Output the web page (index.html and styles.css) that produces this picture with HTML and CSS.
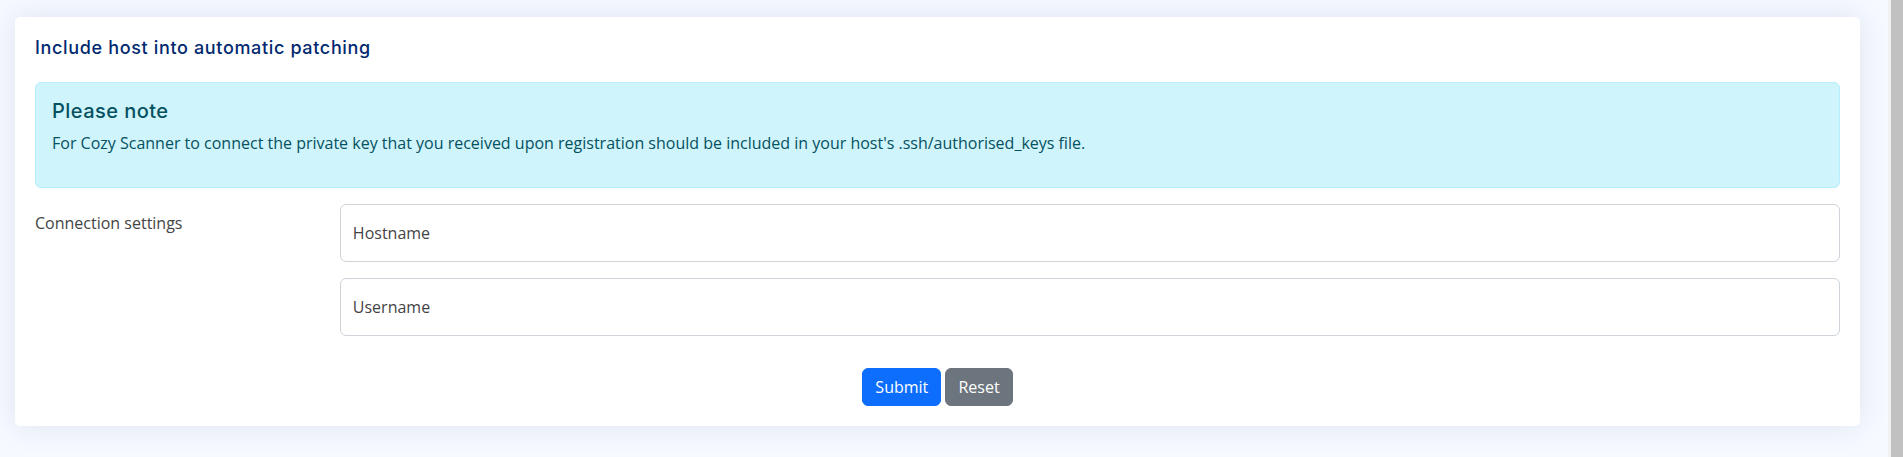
FILE: index.html
```html
<!DOCTYPE html>
<html lang="en">
<head>
<meta charset="utf-8">
<title>Include host into automatic patching</title>
<link rel="stylesheet" href="styles.css">
</head>
<body>
<div class="page">
  <main class="main">
    <section class="card">
      <div class="card-body">
        <h5 class="card-title">Include host into automatic patching</h5>
        <div class="alert">
          <h4 class="alert-heading">Please note</h4>
          <p class="alert-text">For Cozy Scanner to connect the private key that you received upon registration should be included in your host's .ssh/authorised_keys file.</p>
        </div>
        <form class="form">
          <div class="form-row">
            <label class="col-label" for="hostname">Connection settings</label>
            <div class="fields">
              <input class="field" id="hostname" type="text" placeholder="Hostname">
              <input class="field" id="username" type="text" placeholder="Username">
            </div>
          </div>
          <div class="actions">
            <button type="submit" class="btn btn-primary">Submit</button>
            <button type="reset" class="btn btn-secondary">Reset</button>
          </div>
        </form>
      </div>
    </section>
  </main>
  <div class="scrollbar"><div class="scrollbar-thumb"></div></div>
</div>
</body>
</html>
```

FILE: styles.css
```css
* { box-sizing: border-box; }

html, body {
  margin: 0;
  height: 100%;
  overflow: hidden;
}

body {
  background: #f6f9ff;
  font-family: "Open Sans", "Liberation Sans", sans-serif;
  font-size: 16px;
  line-height: 1.5;
  color: #444444;
}

.page {
  display: flex;
  height: 100%;
}

.main {
  flex: 1;
  padding: 17px 28px 0 15px;
}

.card {
  background: #ffffff;
  border-radius: 5px;
  box-shadow: 0 0 30px rgba(1, 41, 112, 0.1);
}

.card-body {
  padding: 0 20px 20px 20px;
}

.card-title {
  margin: 0 0 8px 0;
  padding: 20px 0 15px 0;
  font-family: "Inter", "Noto Sans", sans-serif;
  font-size: 18px;
  font-weight: 500;
  line-height: 1.2;
  color: #012970;
  letter-spacing: 0.65px;
}

.alert {
  background: #cff4fc;
  border: 1px solid #b6effb;
  border-radius: 6px;
  padding: 16px;
  color: #055160;
  margin-bottom: 16px;
}

.alert-heading {
  margin: 0 0 8px 0;
  font-family: "Inter", "Noto Sans", sans-serif;
  font-size: 20px;
  font-weight: 500;
  line-height: 1.2;
  color: #055160;
  letter-spacing: 0.45px;
}

.alert-text {
  margin: 0 0 16px 0;
  font-size: 16px;
  line-height: 1.5;
}

.form-row {
  display: grid;
  grid-template-columns: calc((100% + 24px) / 6 - 24px) 1fr;
  column-gap: 24px;
  margin-bottom: 16px;
}

.col-label {
  padding-top: 7px;
  font-size: 16px;
  line-height: 1.5;
}

.fields {
  display: flex;
  flex-direction: column;
  gap: 16px;
}

.field {
  display: block;
  width: 100%;
  height: 58px;
  margin: 0;
  padding: 16px 12px;
  border: 1px solid #ced4da;
  border-radius: 6px;
  background: #ffffff;
  font-family: "Open Sans", "Liberation Sans", sans-serif;
  font-size: 16px;
  line-height: 1.5;
  color: #212529;
}

.field::placeholder {
  color: #444444;
  opacity: 1;
}

.fields .field:last-child {
  margin-bottom: 16px;
}

.actions {
  text-align: center;
}

.btn {
  display: inline-block;
  padding: 6px 12px;
  border: 1px solid transparent;
  border-radius: 6px;
  font-family: "Open Sans", "Liberation Sans", sans-serif;
  font-size: 16px;
  line-height: 1.5;
  color: #ffffff;
  cursor: pointer;
}

.btn-primary {
  background: #0d6efd;
  border-color: #0d6efd;
}

.btn-secondary {
  background: #6c757d;
  border-color: #6c757d;
}

.scrollbar {
  width: 15px;
  flex: 0 0 15px;
  background: #f1f1f1;
  padding-left: 3px;
}

.scrollbar-thumb {
  height: 100%;
  background: #c1c1c1;
}
```
